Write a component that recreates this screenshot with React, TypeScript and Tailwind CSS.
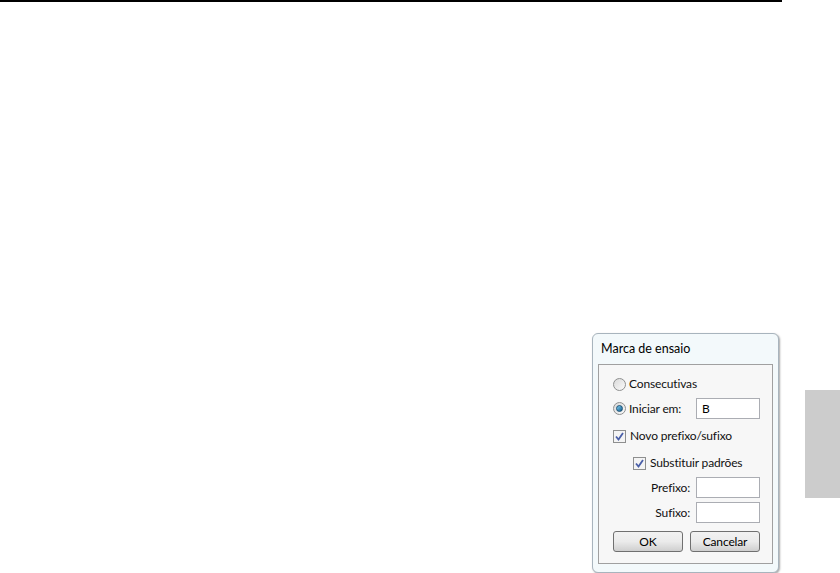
import React from 'react';

function Radio({ checked }: { checked?: boolean }) {
  return (
    <span className="w-[13px] h-[13px] rounded-full border border-[#8e8f8f] bg-gradient-to-br from-[#d9d9d9] to-[#fbfbfb] flex items-center justify-center shrink-0">
      {checked && <span className="w-[7px] h-[7px] rounded-full bg-gradient-to-br from-[#7fd0f3] to-[#0a5d8f] border border-[#1b4f73]" />}
    </span>
  );
}

function Check() {
  return (
    <span className="w-[13px] h-[13px] border border-[#8e8f8f] bg-[#f4f4f4] flex items-center justify-center shrink-0">
      <svg width="9" height="9" viewBox="0 0 9 9">
        <path d="M1 4.5 L3.5 7.5 L8 1" fill="none" stroke="#4a5fa8" strokeWidth="1.8" />
      </svg>
    </span>
  );
}

function Field({ value }: { value?: string }) {
  return (
    <div className="w-[64px] h-[21px] border border-[#abadb3] bg-white px-[5px] flex items-center text-[12px] text-black">
      {value}
    </div>
  );
}

function Btn({ label }: { label: string }) {
  return (
    <button className="w-[71px] h-[21px] rounded-[3px] border border-[#707070] bg-gradient-to-b from-[#f2f2f2] via-[#ebebeb] to-[#cfcfcf] text-[12px] text-black leading-none">
      {label}
    </button>
  );
}

export default function App() {
  return (
    <div className="w-[840px] h-[573px] bg-white relative overflow-hidden" style={{ fontFamily: '"Segoe UI", Lato, "Liberation Sans", sans-serif' }}>
      <div className="w-[782px] h-[2px] bg-black" />

      {/* side tab */}
      <div className="absolute left-[805px] top-[390px] w-[35px] h-[108px] bg-[#cccccc]" />

      {/* dialog */}
      <div className="absolute left-[592px] top-[333px] w-[187px] h-[240px] rounded-[6px] border border-[#a8b4bd] bg-[#f3f9fb] shadow-[1px_1px_2px_rgba(0,0,0,0.35)] flex flex-col px-[5px] pb-[8px]">
        <div className="h-[30px] flex items-center pl-[3px] pt-[1px] text-[12.5px] text-black">Marca de ensaio</div>
        <div className="flex-1 border border-[#a0a0a0] bg-[#f7f7f7] flex flex-col pl-[14px] pr-[12px] pt-[11px] text-[12px] text-[#111] tracking-[-0.15px]">
          <div className="h-[16px] flex items-center gap-[3px]">
            <Radio />
            <span>Consecutivas</span>
          </div>
          <div className="h-[21px] mt-[6px] flex items-center">
            <Radio checked />
            <span className="ml-[3px]">Iniciar em:</span>
            <div className="ml-auto"><Field value="B" /></div>
          </div>
          <div className="h-[16px] mt-[9px] flex items-center gap-[4px]">
            <Check />
            <span>Novo prefixo/sufixo</span>
          </div>
          <div className="h-[16px] mt-[11px] ml-[20px] flex items-center gap-[4px]">
            <Check />
            <span>Substituir padrões</span>
          </div>
          <div className="h-[21px] mt-[6px] flex items-center justify-end gap-[6px]">
            <span>Prefixo:</span>
            <Field />
          </div>
          <div className="h-[21px] mt-[4px] flex items-center justify-end gap-[6px]">
            <span>Sufixo:</span>
            <Field />
          </div>
          <div className="mt-[8px] flex gap-[7px]">
            <Btn label="OK" />
            <Btn label="Cancelar" />
          </div>
        </div>
      </div>
    </div>
  );
}
